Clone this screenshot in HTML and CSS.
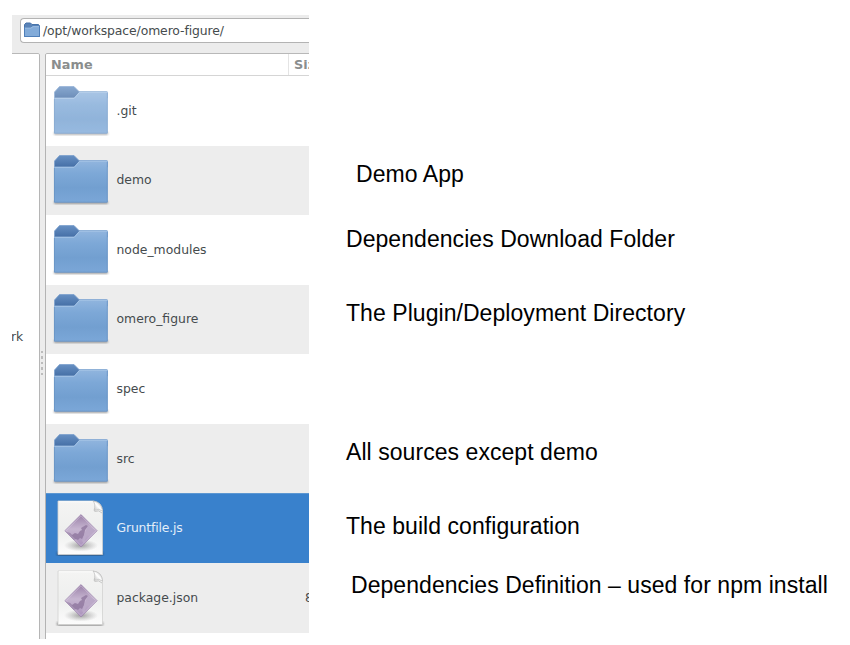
FILE: index.html
```
<!DOCTYPE html>
<html lang="en">
<head>
<meta charset="utf-8">
<title>Project folders</title>
<link rel="stylesheet" href="styles.css">
</head>
<body>
<svg class="defs" width="0" height="0" aria-hidden="true">
  <defs>
    <linearGradient id="front" x1="0" y1="0" x2="0" y2="1"><stop offset="0" stop-color="#91b5de"/><stop offset=".3" stop-color="#7da8d7"/><stop offset=".65" stop-color="#729fd0"/><stop offset="1" stop-color="#7ba7d8"/></linearGradient>
    <linearGradient id="tab" x1="0" y1="0" x2="0" y2="1"><stop offset="0" stop-color="#6790c3"/><stop offset="1" stop-color="#456fa6"/></linearGradient>
    <linearGradient id="paper" x1="0" y1="0" x2="0" y2="1"><stop offset="0" stop-color="#f4f4f3"/><stop offset=".55" stop-color="#eeefee"/><stop offset="1" stop-color="#fcfcfc"/></linearGradient>
    <linearGradient id="gem" x1="0" y1="0" x2="0" y2="1"><stop offset="0" stop-color="#9a80a8"/><stop offset=".45" stop-color="#c6b5d0"/><stop offset="1" stop-color="#a991bb"/></linearGradient>
    <radialGradient id="shade"><stop offset="0" stop-color="#555" stop-opacity=".55"/><stop offset="1" stop-color="#777" stop-opacity="0"/></radialGradient>
    <linearGradient id="curl" x1="0" y1="1" x2="1" y2="0"><stop offset="0" stop-color="#b5b5b5"/><stop offset=".5" stop-color="#fff"/><stop offset="1" stop-color="#bbb"/></linearGradient>
    <filter id="soft"><feGaussianBlur stdDeviation=".8"/></filter>
    <symbol id="folder" viewBox="0 0 58 52">
      <rect x="2" y="47.2" width="54" height="2.6" rx="1" fill="#555" opacity=".65" filter="url(#soft)"/>
      <path d="M2.500 12V7L7.500 1.500H22L27 6.500H54.500Q55.500 6.500 55.500 7.500V13H2.500Z" fill="url(#tab)" stroke="#7ba0cd" stroke-width=".8"/>
      <path d="M2 13H22L27.500 6.800H54.500Q55.700 6.800 55.700 8V47.500Q55.700 48.600 54.600 48.600H3Q2 48.600 2 47.500Z" fill="url(#front)"/>
      <path d="M2.500 13.300H22.200L27.700 7.200H55.200" fill="none" stroke="#acc9e8" stroke-width=".8"/>
      <path d="M2.400 14V48.200H55.300V8" fill="none" stroke="#6590c1" stroke-width=".7"/>
    </symbol>
    <symbol id="document" viewBox="0 0 52 62">
      <rect x="3" y="55" width="46" height="3.500" rx="1.500" fill="#222" opacity=".6" filter="url(#soft)"/>
      <path d="M4 4H39Q48 5 48.500 14V57.500H4Z" fill="url(#paper)" stroke="#d2d2d0" stroke-width=".8"/>
      <path d="M4.800 4.800H39" stroke="#fff"/>
      <ellipse cx="27" cy="48.500" rx="17" ry="6" fill="url(#shade)"/>
      <path d="M27 17.500L43.200 33.700L27 49.900L10.800 33.700Z" fill="url(#gem)" stroke="#9980aa" stroke-width=".6"/>
      <path d="M11.500 34.200L16 36L18 38L21 36L24 37L26 34L28 33L27 31L32 28L34 29L31 33L30 38L28 42L26 41L24 43L22 42L20 43Z" fill="#8f779e" opacity=".8"/>
      <path d="M34 29L42 33.500L37 39L34 37L32 40L30 46L28 44L31 36Z" fill="#bba9c8"/>
      <path d="M27 18.800L41.900 33.700L27 48.600L12.100 33.700Z" fill="none" stroke="#e0d4e8" stroke-width=".6" opacity=".7"/>
      <path d="M39 4Q42 7 40 13.500Q45 11 48.500 14Q48 5 39 4Z" fill="url(#curl)" stroke="#b3b3b3" stroke-width=".6"/>
      <path d="M40.500 14.500Q45 12.500 48 16" fill="none" stroke="#a9a9a9" stroke-width="1" opacity=".6"/>
    </symbol>
  </defs>
</svg>
<main class="page">
  <section class="window">
    <header class="toolbar">
      <div class="location">
        <svg class="location-icon" viewBox="0 0 18 16"><path d="M1.500 5V2.500L3 1H7.500L9 2.500H15.500L16.500 4V14.500H1.500Z" fill="#5a83b7" stroke="#4773aa"/><path d="M1.500 5.500H7.500L9.500 4H16.500V14.500H1.500Z" fill="#82abd9" stroke="#4f7fb9"/><path d="M2 6H8L10 4.600H16" fill="none" stroke="#b2cdea" stroke-width=".7"/></svg>
        <span class="path">/opt/workspace/omero-figure/</span>
      </div>
    </header>
    <div class="panes">
      <aside class="sidebar"><span>rk</span></aside>
      <div class="divider"><i></i><i></i><i></i><i></i><i></i></div>
      <div class="list">
        <div class="columns"><span class="col-name">Name</span><span class="col-size">Size</span></div>
        <div class="row"><svg class="folder faded"><use href="#folder"/></svg><span class="name">.git</span></div>
        <div class="row"><svg class="folder"><use href="#folder"/></svg><span class="name">demo</span></div>
        <div class="row"><svg class="folder"><use href="#folder"/></svg><span class="name">node_modules</span></div>
        <div class="row"><svg class="folder"><use href="#folder"/></svg><span class="name">omero_figure</span></div>
        <div class="row"><svg class="folder"><use href="#folder"/></svg><span class="name">spec</span></div>
        <div class="row"><svg class="folder"><use href="#folder"/></svg><span class="name">src</span></div>
        <div class="row selected"><svg class="document"><use href="#document"/></svg><span class="name">Gruntfile.js</span></div>
        <div class="row"><svg class="document"><use href="#document"/></svg><span class="name">package.json</span><span class="size">8</span></div>
      </div>
    </div>
  </section>
  <section class="notes">
    <p class="note demo">Demo App</p>
    <p class="note modules">Dependencies Download Folder</p>
    <p class="note plugin">The Plugin/Deployment Directory</p>
    <p class="note sources">All sources except demo</p>
    <p class="note build">The build configuration</p>
    <p class="note package">Dependencies Definition – used for npm install</p>
  </section>
</main>
</body>
</html>
```
FILE: styles.css
```
* { box-sizing: border-box; }
body { margin: 0; background: #fff; }
.defs { display: block; }
.page { display: flex; width: 850px; height: 645px; padding: 15px 0 6px 12px; overflow: hidden; }
.window {
  display: flex; flex-direction: column; flex: none;
  width: 297px; overflow: hidden;
  font: 12.4px/18px "DejaVu Sans", sans-serif; color: #454b4d;
}
.toolbar { flex: none; height: 38px; padding: 3px 0 0 8px; background: #ececec; }
.location {
  display: flex; align-items: center; height: 25px; padding-left: 2px;
  background: #fff; border: 1px solid #b3b3b3; border-right: 0; border-radius: 4px 0 0 4px;
}
.location-icon { width: 18px; height: 16px; margin: -1px 2px 0 0; flex: none; }
.path { white-space: nowrap; letter-spacing: -.1px; }
.panes { display: flex; flex: 1; min-height: 0; }
.sidebar {
  width: 28px; flex: none; padding-top: 274px; overflow: hidden;
  border-top: 1px solid #b8b8b8; border-right: 1px solid #b5b5b5; border-radius: 0 2px 0 0;
}
.sidebar span { margin-left: -1px; }
.divider {
  display: flex; flex-direction: column; align-items: flex-start; gap: 3px;
  width: 5px; flex: none; padding: 298px 0 0 1px; background: #ececec;
}
.divider i { width: 2px; height: 2.400px; background: #bcbcbc; }
.list { flex: 1; min-width: 0; overflow: hidden; border-left: 1px solid #b3b3b3; border-top: 1px solid #b8b8b8; border-radius: 2px 0 0 0; }
.columns {
  display: flex; height: 22px; border-bottom: 1px solid #d5d5d5;
  font-size: 12.8px; font-weight: bold; letter-spacing: .1px; line-height: 21px; color: #8a8d8d; white-space: nowrap;
}
.col-name { width: 242px; flex: none; padding-left: 5px; }
.col-size { border-left: 1px solid #e4e4e4; padding-left: 5px; }
.row { display: flex; align-items: center; height: 69.570px; padding-left: 5.500px; }
.row:nth-child(odd) { background: #ededed; }
.folder { width: 58px; height: 52px; flex: none; }
.faded { opacity: .78; }
.document { width: 52px; height: 62px; margin: 0 4px 0 2px; flex: none; }
.name { margin-left: 7px; }
.row.selected { background: #3981cc; color: #e3eef9; box-shadow: inset 0 1px #5c97d2; }
.selected .name { letter-spacing: -.15px; }
.size { margin-left: auto; margin-right: -4px; }
.notes { flex: 1; padding-left: 37px; font: 23px/26px "Liberation Sans", sans-serif; letter-spacing: .055px; color: #000; }
.note { margin: 0; height: 26px; white-space: nowrap; }
.demo { margin-top: 146px; padding-left: 10px; }
.modules { margin-top: 39px; }
.plugin { margin-top: 48px; }
.sources { margin-top: 113px; }
.build { margin-top: 48px; }
.package { margin-top: 33px; padding-left: 5px; }
```
